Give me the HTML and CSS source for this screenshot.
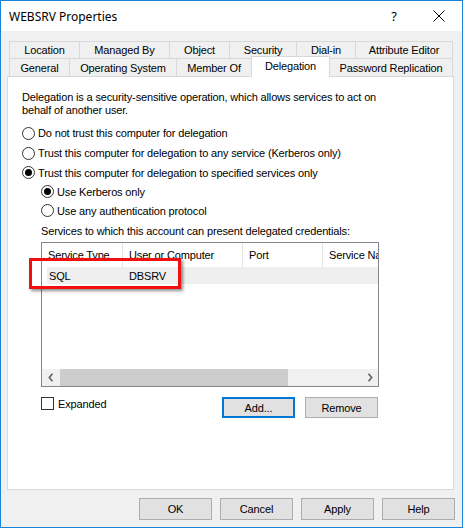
FILE: index.html
```html
<!DOCTYPE html>
<html lang="en">
  <head>
    <meta charset="UTF-8" />
    <meta name="viewport" content="width=device-width, initial-scale=1.0" />
    <title>WEBSRV Properties</title>
    <link rel="stylesheet" href="styles.css">
  </head>
  <body>
    <div class="window">
      <div class="titlebar">
        <span class="title">WEBSRV Properties</span>
        <span class="help-btn">?</span>
        <span class="close-btn">
          <svg width="12" height="12" viewBox="0 0 12 12">
            <path d="M0.5 0.5 L11.5 11.5 M11.5 0.5 L0.5 11.5" stroke="#000" stroke-width="1" fill="none" />
          </svg>
        </span>
      </div>

      <div class="client">
        <div class="tabs">
          <div class="tab-row row-top">
            <div class="tab">Location</div>
            <div class="tab">Managed By</div>
            <div class="tab">Object</div>
            <div class="tab">Security</div>
            <div class="tab">Dial-in</div>
            <div class="tab">Attribute Editor</div>
          </div>
          <div class="tab-row row-bottom">
            <div class="tab">General</div>
            <div class="tab">Operating System</div>
            <div class="tab">Member Of</div>
            <div class="tab active">Delegation</div>
            <div class="tab">Password Replication</div>
          </div>
        </div>

        <div class="panel">
          <p class="intro">
            Delegation is a security-sensitive operation, which allows services to act on<br>
            behalf of another user.
          </p>

          <div class="options">
            <label class="radio"><span class="dot"></span>Do not trust this computer for delegation</label>
            <label class="radio"><span class="dot"></span>Trust this computer for delegation to any service (Kerberos only)</label>
            <label class="radio"><span class="dot checked"></span>Trust this computer for delegation to specified services only</label>
            <div class="sub">
              <label class="radio"><span class="dot checked"></span>Use Kerberos only</label>
              <label class="radio"><span class="dot"></span>Use any authentication protocol</label>
            </div>
          </div>

          <div class="caption">Services to which this account can present delegated credentials:</div>

          <div class="listview">
            <div class="lv-header">
              <div class="lv-col">Service Type</div>
              <div class="lv-col">User or Computer</div>
              <div class="lv-col">Port</div>
              <div class="lv-col last">Service Name</div>
            </div>
            <div class="lv-body">
              <div class="lv-row">
                <span>SQL</span>
                <span>DBSRV</span>
              </div>
            </div>
            <div class="hscroll">
              <div class="scroll-btn">
                <svg width="6" height="9" viewBox="0 0 6 9"><path d="M4.5 0.8 L1.3 4.5 L4.5 8.2" stroke="#606060" stroke-width="1.6" fill="none" /></svg>
              </div>
              <div class="scroll-track"><div class="scroll-thumb"></div></div>
              <div class="scroll-btn">
                <svg width="6" height="9" viewBox="0 0 6 9"><path d="M1.5 0.8 L4.7 4.5 L1.5 8.2" stroke="#606060" stroke-width="1.6" fill="none" /></svg>
              </div>
            </div>
          </div>

          <div class="list-actions">
            <label class="check"><span class="box"></span>Expanded</label>
            <button class="btn focused">Add...</button>
            <button class="btn">Remove</button>
          </div>

          <div class="mark"></div>
        </div>

        <div class="dialog-buttons">
          <button class="btn">OK</button>
          <button class="btn">Cancel</button>
          <button class="btn">Apply</button>
          <button class="btn">Help</button>
        </div>
      </div>
    </div>
  </body>
</html>
```

FILE: styles.css
```css
* {
  box-sizing: border-box;
}
body {
  margin: 0;
  font-family: "Liberation Sans", Arial, sans-serif;
  font-size: 11px;
  letter-spacing: -0.15px;
  color: #000;
}
.window {
  width: 463px;
  height: 528px;
  border: 1px solid #1883d7;
  background: #f0f0f0;
  display: flex;
  flex-direction: column;
}

/* title bar */
.titlebar {
  height: 30px;
  background: #fff;
  display: flex;
  align-items: center;
  padding: 0 17px 0 8px;
  font-family: "Noto Sans", sans-serif;
  font-size: 12px;
  letter-spacing: 0;
}
.title {
  flex: 1;
}
.help-btn {
  font-size: 13px;
  margin-right: 36px;
}
.close-btn {
  display: flex;
}

/* dialog body */
.client {
  flex: 1;
  display: flex;
  flex-direction: column;
  padding: 10px 8px 0 6px;
}
.tabs {
  margin-left: 2px;
}
.tab-row {
  display: grid;
}
.row-top {
  grid-template-columns: 70px 90px 60px 67px 59px 98px;
  height: 17px;
}
.row-bottom {
  grid-template-columns: 60px 107px 75px 78px 124px;
  height: 18px;
}
.tab {
  border: 1px solid #d9d9d9;
  border-right: none;
  border-bottom: none;
  background: #f0f0f0;
  display: flex;
  align-items: center;
  justify-content: center;
  white-space: nowrap;
}
.tab:last-child {
  border-right: 1px solid #d9d9d9;
}
.tab.active {
  position: relative;
  z-index: 1;
  background: #fff;
  margin: -2px -1px -1px 0;
  padding-bottom: 2px;
  border-right: 1px solid #d9d9d9;
}

.panel {
  position: relative;
  height: 414px;
  border: 1px solid #d9d9d9;
  background: #fff;
  padding: 14px 0 0 14px;
}
.intro {
  margin: 0;
  line-height: 13px;
}
.options {
  margin-top: 6px;
}
.radio {
  display: flex;
  align-items: center;
  gap: 3px;
  height: 19px;
  white-space: nowrap;
}
.options > .radio:first-child,
.options > .radio:nth-child(2) {
  height: 20px;
}
.dot {
  width: 13px;
  height: 13px;
  border: 1px solid #333;
  border-radius: 50%;
  background: #fff;
  display: flex;
  align-items: center;
  justify-content: center;
}
.dot.checked::after {
  content: "";
  width: 7px;
  height: 7px;
  border-radius: 50%;
  background: #000;
}
.sub {
  margin-left: 19px;
}
.caption {
  margin: 4px 0 0 19px;
  height: 14px;
  line-height: 14px;
}

/* service list */
.listview {
  margin: 4px 0 0 19px;
  width: 338px;
  height: 145px;
  border: 1px solid #828790;
  display: flex;
  flex-direction: column;
}
.lv-header {
  height: 24px;
  display: grid;
  grid-template-columns: 81px 120px 80px 1fr;
}
.lv-col {
  display: flex;
  align-items: center;
  padding-left: 6px;
  border-right: 1px solid #e5e5e5;
  white-space: nowrap;
  overflow: hidden;
}
.lv-col.last {
  border-right: none;
}
.lv-body {
  flex: 1;
}
.lv-row {
  height: 17px;
  margin-left: 5px;
  background: #efefef;
  display: grid;
  grid-template-columns: 80px 1fr;
  align-items: center;
}
.lv-row span {
  padding-left: 2px;
}
.hscroll {
  height: 17px;
  display: flex;
  background: #f0f0f0;
}
.scroll-btn {
  width: 17px;
  display: flex;
  align-items: center;
  justify-content: center;
}
.scroll-track {
  flex: 1;
  padding-left: 1px;
  display: flex;
}
.scroll-thumb {
  width: 228px;
  background: #cdcdcd;
}

.list-actions {
  margin: 10px 0 0 19px;
  width: 338px;
  padding-right: 1px;
  display: flex;
  align-items: flex-start;
  gap: 10px;
}
.check {
  flex: 1;
  display: flex;
  align-items: center;
  gap: 4px;
  height: 13px;
}
.box {
  width: 13px;
  height: 13px;
  border: 1px solid #333;
  background: #fff;
}
.btn {
  width: 73px;
  height: 21px;
  padding: 0;
  border: 1px solid #adadad;
  background: #e1e1e1;
  font-family: inherit;
  font-size: 11px;
  letter-spacing: inherit;
  color: #000;
}
.btn.focused {
  border: 2px solid #0078d7;
}

/* red highlight drawn over the list entry */
.mark {
  position: absolute;
  left: 21px;
  top: 181px;
  width: 152px;
  height: 31px;
  border: 3px solid #f01010;
  box-shadow: 2px 2px 3px rgba(0, 0, 0, 0.45);
}

.dialog-buttons {
  margin: 8px -1px 0 0;
  display: flex;
  justify-content: flex-end;
  gap: 8px;
}
.dialog-buttons .btn {
  height: 22px;
}
```
